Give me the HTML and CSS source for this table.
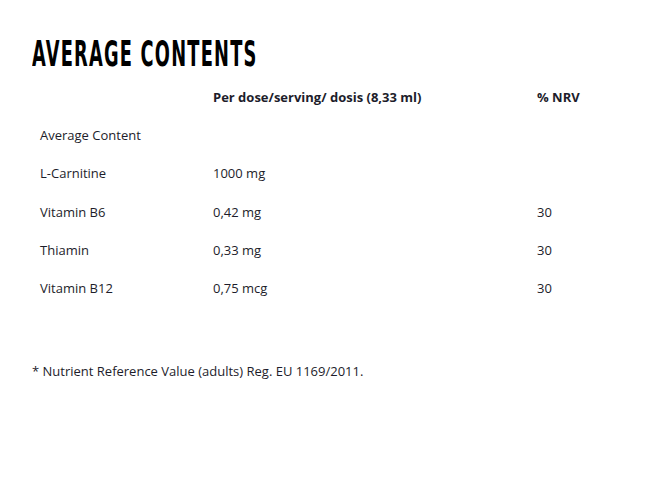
FILE: index.html
```html
<!DOCTYPE html>
<html>
<head>
<meta charset="utf-8">
<link rel="stylesheet" href="styles.css">
</head>
<body>
<div class="page">
  <h2 class="title"><span class="title-text">AVERAGE CONTENTS</span></h2>
  <div class="table">
    <div class="row head">
      <div class="cell"></div>
      <div class="cell">Per dose/serving/ dosis (8,33 ml)</div>
      <div class="cell">% NRV</div>
    </div>
    <div class="row">
      <div class="cell">Average Content</div>
      <div class="cell"></div>
      <div class="cell"></div>
    </div>
    <div class="row">
      <div class="cell">L-Carnitine</div>
      <div class="cell">1000 mg</div>
      <div class="cell"></div>
    </div>
    <div class="row">
      <div class="cell">Vitamin B6</div>
      <div class="cell">0,42 mg</div>
      <div class="cell">30</div>
    </div>
    <div class="row">
      <div class="cell">Thiamin</div>
      <div class="cell">0,33 mg</div>
      <div class="cell">30</div>
    </div>
    <div class="row">
      <div class="cell">Vitamin B12</div>
      <div class="cell">0,75 mcg</div>
      <div class="cell">30</div>
    </div>
  </div>
  <p class="note">* Nutrient Reference Value (adults) Reg. EU 1169/2011.</p>
</div>
</body>
</html>
```
FILE: styles.css
```css
* { box-sizing: border-box; }
html, body { margin: 0; padding: 0; background: #fff; }
body {
  font-family: "Open Sans", "Liberation Sans", sans-serif;
  font-size: 13px;
  color: #1d1d2b;
}
.page {
  padding: 36px 32px 0 32px;
}
.title {
  margin: 0;
  height: 36px;
  line-height: 36px;
  font-family: "DejaVu Sans Condensed", "Liberation Sans", sans-serif;
  font-weight: 700;
  font-size: 36px;
  letter-spacing: 2.2px;
  color: #000;
  white-space: nowrap;
}
.title-text {
  display: inline-block;
  transform: scaleX(0.55);
  transform-origin: left center;
}
.table {
  margin-top: 6px;
}
.row {
  display: grid;
  grid-template-columns: 173px 324px 1fr;
  height: 38.33px;
  align-items: center;
}
.cell {
  padding-left: 8px;
  line-height: 19px;
}
.head .cell {
  font-weight: 700;
}
.note {
  margin: 54px 0 0 0;
  line-height: 19px;
}
```
